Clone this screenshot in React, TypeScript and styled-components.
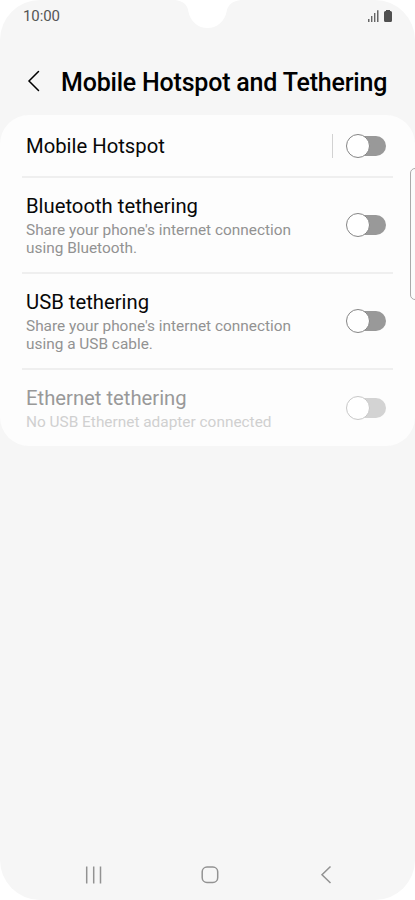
import React from "react";
import styled, { createGlobalStyle } from "styled-components";

const GlobalStyle = createGlobalStyle`
  * { box-sizing: border-box; }
  html, body { margin: 0; padding: 0; background: #fff; }
`;

const Screen = styled.div`
  position: relative;
  display: flex;
  flex-direction: column;
  width: 415px;
  height: 900px;
  overflow: hidden;
  border-radius: 40px;
  background: #f6f6f6;
  color: #000;
  font-family: Roboto, "Liberation Sans", sans-serif;
`;

const Notch = styled.svg`
  position: absolute;
  top: 0;
  left: 172px;
`;

const StatusBar = styled.header`
  display: flex;
  justify-content: space-between;
  height: 46px;
  padding: 7px 22px 0 23px;
  color: #555;
`;

const Clock = styled.span`
  font-size: 15px;
  line-height: 18px;
  letter-spacing: -0.1px;
`;

const StatusIcons = styled.div`
  display: flex;
  gap: 4px;
  padding-top: 2px;
`;

const TitleBar = styled.div`
  display: flex;
  align-items: center;
  height: 69px;
  padding-left: 27px;
`;

const BackButton = styled.button`
  display: flex;
  width: 34px;
  padding: 0;
  border: 0;
  background: none;
`;

const Title = styled.h1`
  margin: 4px 0 0;
  font-size: 25px;
  font-weight: 500;
  line-height: 30px;
  letter-spacing: -0.2px;
  white-space: nowrap;
`;

const Card = styled.main`
  height: 331px;
  padding: 0 22px;
  border-radius: 29px;
  background: #fdfdfd;
`;

const Row = styled.section<{ $height: number; $divided?: boolean }>`
  display: flex;
  align-items: center;
  justify-content: space-between;
  height: ${(p) => p.$height}px;
  padding: 0 7px 0 4px;
  border-bottom: ${(p) => (p.$divided ? "2px solid #efefef" : "0")};
`;

const Label = styled.h2<{ $disabled?: boolean }>`
  margin: 0;
  font-size: 20.25px;
  font-weight: 400;
  line-height: 24px;
  color: ${(p) => (p.$disabled ? "#999" : "#080808")};
`;

const Description = styled.p<{ $disabled?: boolean }>`
  margin: 3px 0 0;
  font-size: 15.4px;
  line-height: 18px;
  white-space: pre-line;
  color: ${(p) => (p.$disabled ? "#d0d0d0" : "#929292")};
`;

const Controls = styled.div<{ $raised?: boolean }>`
  display: flex;
  align-items: center;
  gap: 13px;
  padding-bottom: ${(p) => (p.$raised ? "1px" : "0")};
`;

const Separator = styled.span`
  width: 1px;
  height: 24px;
  background: #d2d2d2;
`;

const Track = styled.button<{ $disabled?: boolean }>`
  display: flex;
  align-items: center;
  width: 39px;
  height: 20px;
  margin-left: 1px;
  padding: 0;
  border: 0;
  border-radius: 10px;
  background: ${(p) => (p.$disabled ? "#d3d3d3" : "#999")};
`;

const Thumb = styled.span<{ $disabled?: boolean }>`
  flex: none;
  width: 24px;
  height: 24px;
  margin-left: -1px;
  border: 1px solid ${(p) => (p.$disabled ? "#c8c8c8" : "#858585")};
  border-radius: 50%;
  background: #fff;
`;

const EdgeHandle = styled.div`
  position: absolute;
  top: 168px;
  right: -6px;
  width: 11px;
  height: 132px;
  border: 1px solid #aaa;
  border-radius: 5px;
  background: #fbfbfb;
`;

const NavBar = styled.nav`
  display: grid;
  grid-template-columns: 117px 118px 14px;
  align-items: center;
  height: 50px;
  margin-top: auto;
  padding-left: 84px;
`;

const NavButton = styled.button`
  display: flex;
  padding: 0;
  border: 0;
  background: none;
`;

function Toggle({ disabled }: { disabled?: boolean }) {
  return (
    <Track $disabled={disabled} disabled={disabled} role="switch" aria-checked={false}>
      <Thumb $disabled={disabled} />
    </Track>
  );
}

const options = [
  { label: "Mobile Hotspot", height: 63, split: true },
  { label: "Bluetooth tethering", text: "Share your phone's internet connection\nusing Bluetooth.", height: 96 },
  { label: "USB tethering", text: "Share your phone's internet connection\nusing a USB cable.", height: 96 },
  { label: "Ethernet tethering", text: "No USB Ethernet adapter connected", height: 76, disabled: true },
];

export default function App() {
  return (
    <>
      <GlobalStyle />
      <Screen>
        <StatusBar>
          <Clock>10:00</Clock>
          <StatusIcons>
            <svg width="12" height="14" viewBox="0 0 12 14" fill="#666">
              <path d="M1 10h1.500v3H1zM4 7h1.400v6H4zM7 4h1.400v9H7zM10 1.200h1.500V13H10z" />
            </svg>
            <svg width="10" height="14" viewBox="0 0 10 14" fill="#505050">
              <path d="M3 1h4v1h.5A1.500 1.500 0 0 1 9 3.500v8A1.500 1.500 0 0 1 7.500 13h-5A1.500 1.500 0 0 1 1 11.500v-8A1.500 1.500 0 0 1 2.500 2H3z" />
            </svg>
          </StatusIcons>
        </StatusBar>
        <Notch width="72" height="30" viewBox="0 0 72 30">
          <path d="M3 0C11 1 15.500 4.500 16.500 12A19.300 19.300 0 0 0 54.500 12C56 4.500 60.500 1 69 0Z" fill="#fff" />
        </Notch>
        <TitleBar>
          <BackButton aria-label="Back">
            <svg width="14" height="22" viewBox="0 0 14 22" fill="none" stroke="#000" strokeWidth="1.5" strokeLinecap="round">
              <path d="M11.500 1.500L2 11l9.500 9.500" />
            </svg>
          </BackButton>
          <Title>Mobile Hotspot and Tethering</Title>
        </TitleBar>
        <Card>
          {options.map((o, i) => (
            <Row key={o.label} $height={o.height} $divided={i < options.length - 1}>
              <div>
                <Label $disabled={o.disabled}>{o.label}</Label>
                {o.text && <Description $disabled={o.disabled}>{o.text}</Description>}
              </div>
              <Controls $raised={!o.split}>
                {o.split && <Separator />}
                <Toggle disabled={o.disabled} />
              </Controls>
            </Row>
          ))}
        </Card>
        <EdgeHandle />
        <NavBar>
          <NavButton aria-label="Recent apps">
            <svg width="20" height="20" viewBox="0 0 20 20" stroke="#929292" strokeWidth="1.5">
              <path d="M2.700 1.500v17M9.700 1.500v17M16.500 1.500v17" />
            </svg>
          </NavButton>
          <NavButton aria-label="Home">
            <svg width="20" height="20" viewBox="0 0 20 20" fill="none" stroke="#929292" strokeWidth="1.500">
              <rect x="1.200" y="2" width="15.500" height="15.500" rx="4.800" />
            </svg>
          </NavButton>
          <NavButton aria-label="Back">
            <svg width="14" height="20" viewBox="0 0 14 20" fill="none" stroke="#929292" strokeWidth="1.500">
              <path d="M11.500 1.500L3 9.800L11.500 18" />
            </svg>
          </NavButton>
        </NavBar>
      </Screen>
    </>
  );
}
